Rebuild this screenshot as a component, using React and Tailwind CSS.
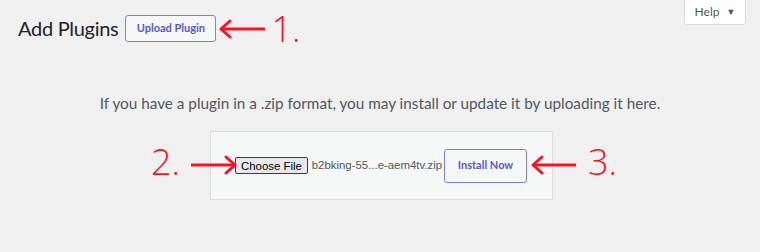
import React from "react";

function ArrowLeft({ w }) {
  return (
    <svg width={w} height="20" viewBox={`0 0 ${w} 20`} className="block">
      <line x1="3" y1="10" x2={w} y2="10" stroke="#ff1020" strokeWidth="3" />
      <polyline points="12,2 3,10 12,18" fill="none" stroke="#ff1020" strokeWidth="3" strokeLinecap="round" strokeLinejoin="round" />
    </svg>
  );
}

function ArrowRight({ w }) {
  return (
    <svg width={w} height="20" viewBox={`0 0 ${w} 20`} className="block">
      <line x1="0" y1="10" x2={w - 3} y2="10" stroke="#ff1020" strokeWidth="3" />
      <polyline points={`${w - 12},2 ${w - 3},10 ${w - 12},18`} fill="none" stroke="#ff1020" strokeWidth="3" strokeLinecap="round" strokeLinejoin="round" />
    </svg>
  );
}

export default function App() {
  return (
    <div className="relative w-[760px] h-[252px] overflow-hidden bg-[#f0f0f1] font-['Lato','Open_Sans',sans-serif] text-[#1d2327]">
      <div className="absolute right-[14px] top-0 flex h-[25px] w-[62px] items-center justify-center gap-[7px] rounded-b-[4px] border border-t-0 border-[#dcdcde] bg-white text-[12px] text-[#50575e]">
        <span>Help</span>
        <span className="text-[9px]">▼</span>
      </div>

      <div className="flex items-center pl-[18px] pt-[15px]">
        <h1 className="text-[20px] leading-[27px] tracking-[-0.3px]">Add Plugins</h1>
        <button className="ml-[7px] h-[27px] w-[91px] rounded-[3px] border border-[#7b80ea] bg-[#f6f7f7] text-[11px] font-bold text-[#5458d8]">
          Upload Plugin
        </button>
        <div className="ml-[2px]"><ArrowLeft w={47} /></div>
        <span className="ml-[6px] font-['Open_Sans',sans-serif] text-[36px] font-light leading-[27px] text-[#ff1020]">1.</span>
      </div>

      <p className="mt-[51px] text-center text-[15.3px] leading-[20px] text-[#50575e]">
        If you have a plugin in a .zip format, you may install or update it by uploading it here.
      </p>

      <div className="mt-[18px] flex justify-center">
        <div className="relative ml-[3px] flex h-[69px] w-[343px] items-center border border-[#dcdcde] bg-[#f6f7f7] pl-[24px]">
          <button className="h-[17px] rounded-[2px] border border-[#3c3c3c] bg-[#e9e9ed] px-[5px] font-['Liberation_Sans',Arial,sans-serif] text-[11.4px] leading-[14px] text-black">
            Choose File
          </button>
          <span className="ml-[4px] font-['Liberation_Sans',Arial,sans-serif] text-[11.4px] text-[#50575e]">b2bking-55...e-aem4tv.zip</span>
          <button className="ml-[2px] h-[34px] w-[83px] rounded-[3px] border border-[#7b80ea] bg-[#f6f7f7] text-[11px] font-bold text-[#5458d8]">
            Install Now
          </button>

          <span className="absolute left-[-60px] top-[10px] font-['Open_Sans',sans-serif] text-[36px] font-light leading-[40px] text-[#ff1020]">2.</span>
          <div className="absolute left-[-20px] top-[23px]"><ArrowRight w={47} /></div>
          <div className="absolute left-[319px] top-[23px]"><ArrowLeft w={46} /></div>
          <span className="absolute left-[377px] top-[10px] font-['Open_Sans',sans-serif] text-[36px] font-light leading-[40px] text-[#ff1020]">3.</span>
        </div>
      </div>
    </div>
  );
}
